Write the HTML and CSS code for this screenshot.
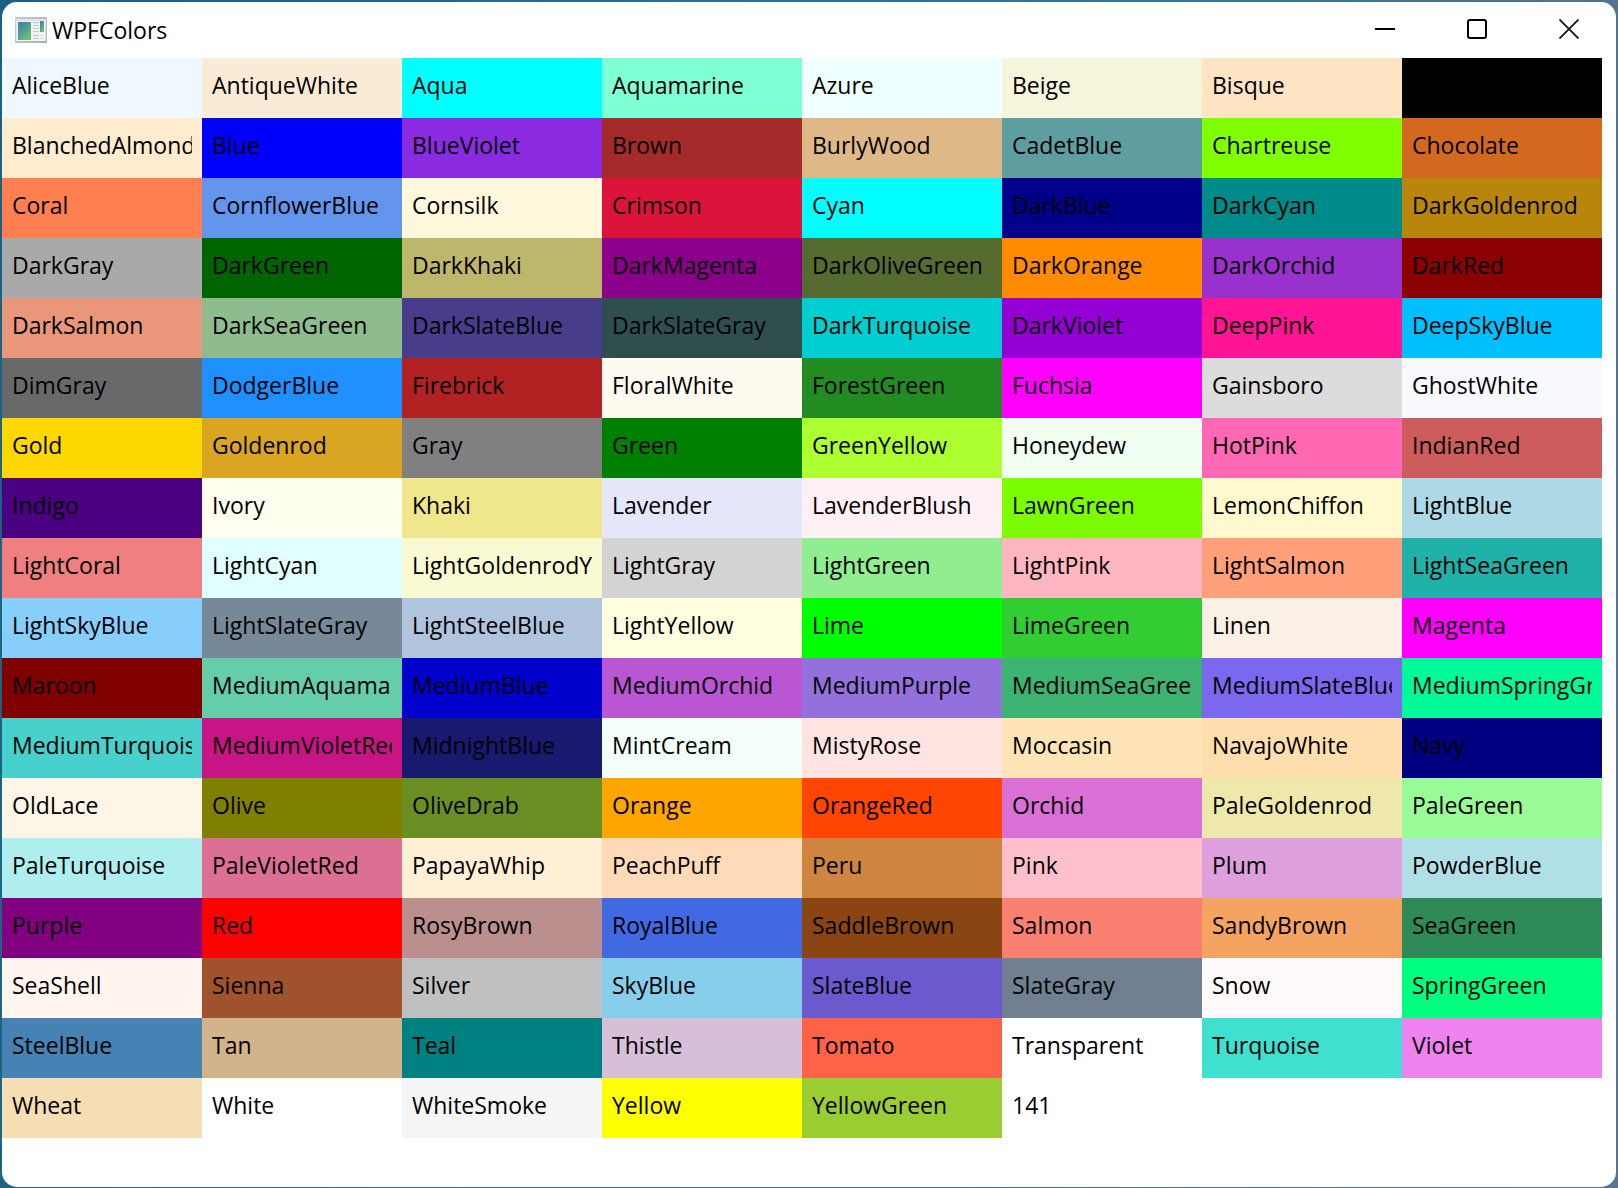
FILE: index.html
```html
<!DOCTYPE html>
<html lang="en">
<head>
<meta charset="utf-8">
<title>WPFColors</title>
<link rel="stylesheet" href="styles.css">
</head>
<body>
<div class="window">
<header class="titlebar">
<svg class="app-icon" width="32" height="26" viewBox="0 0 32 26" aria-hidden="true">
<defs><linearGradient id="pane" x1="0" y1="0" x2="0.6" y2="1"><stop offset="0" stop-color="#3f7fa6"/><stop offset="0.5" stop-color="#4c9a90"/><stop offset="1" stop-color="#6fbf73"/></linearGradient>
<linearGradient id="frame" x1="0" y1="0" x2="1" y2="1"><stop offset="0" stop-color="#d3d7dc"/><stop offset="1" stop-color="#a9adb3"/></linearGradient></defs>
<rect width="32" height="26" fill="url(#frame)"/>
<rect x="1" y="2" width="30" height="22" fill="#dfe2e6"/>
<path d="M1 1h30" stroke="#b4bac2"/>
<rect x="2" y="4" width="15" height="20" fill="#f4f5f5"/>
<rect x="3" y="5" width="13" height="18" fill="url(#pane)"/>
<rect x="17" y="4" width="13" height="20" fill="#f1f2f3"/>
<path d="M18 5.500h6M18 8.500h6M18 11.500h6M18 14.500h6M18 18.500h6M18 21.500h6" stroke="#c3c7cb"/>
<rect x="25" y="4" width="4" height="11" fill="url(#pane)"/>
<path d="M25 18.500h4M25 21.500h4" stroke="#dadcdf"/>
</svg>
<h1 class="title">WPFColors</h1>
<div class="controls">
<button class="control" type="button" aria-label="Minimize"><svg width="20" height="20" viewBox="0 0 20 20"><path d="M0 10h20" stroke="#000" stroke-width="2"/></svg></button>
<button class="control" type="button" aria-label="Maximize"><svg width="20" height="20" viewBox="0 0 20 20"><rect x="1" y="1" width="18" height="18" rx="2" fill="none" stroke="#000" stroke-width="2"/></svg></button>
<button class="control" type="button" aria-label="Close"><svg width="20" height="20" viewBox="0 0 20 20"><path d="M.5.5l19 19M19.500.5l-19 19" stroke="#111" stroke-width="1.700"/></svg></button>
</div>
</header>
<ul class="palette">
<li class="swatch" style="background:AliceBlue"><span>AliceBlue</span></li>
<li class="swatch" style="background:AntiqueWhite"><span>AntiqueWhite</span></li>
<li class="swatch" style="background:Aqua"><span>Aqua</span></li>
<li class="swatch" style="background:Aquamarine"><span>Aquamarine</span></li>
<li class="swatch" style="background:Azure"><span>Azure</span></li>
<li class="swatch" style="background:Beige"><span>Beige</span></li>
<li class="swatch" style="background:Bisque"><span>Bisque</span></li>
<li class="swatch" style="background:Black"><span>Black</span></li>
<li class="swatch" style="background:BlanchedAlmond"><span>BlanchedAlmond</span></li>
<li class="swatch" style="background:Blue"><span>Blue</span></li>
<li class="swatch" style="background:BlueViolet"><span>BlueViolet</span></li>
<li class="swatch" style="background:Brown"><span>Brown</span></li>
<li class="swatch" style="background:BurlyWood"><span>BurlyWood</span></li>
<li class="swatch" style="background:CadetBlue"><span>CadetBlue</span></li>
<li class="swatch" style="background:Chartreuse"><span>Chartreuse</span></li>
<li class="swatch" style="background:Chocolate"><span>Chocolate</span></li>
<li class="swatch" style="background:Coral"><span>Coral</span></li>
<li class="swatch" style="background:CornflowerBlue"><span>CornflowerBlue</span></li>
<li class="swatch" style="background:Cornsilk"><span>Cornsilk</span></li>
<li class="swatch" style="background:Crimson"><span>Crimson</span></li>
<li class="swatch" style="background:Cyan"><span>Cyan</span></li>
<li class="swatch" style="background:DarkBlue"><span>DarkBlue</span></li>
<li class="swatch" style="background:DarkCyan"><span>DarkCyan</span></li>
<li class="swatch" style="background:DarkGoldenrod"><span>DarkGoldenrod</span></li>
<li class="swatch" style="background:DarkGray"><span>DarkGray</span></li>
<li class="swatch" style="background:DarkGreen"><span>DarkGreen</span></li>
<li class="swatch" style="background:DarkKhaki"><span>DarkKhaki</span></li>
<li class="swatch" style="background:DarkMagenta"><span>DarkMagenta</span></li>
<li class="swatch" style="background:DarkOliveGreen"><span>DarkOliveGreen</span></li>
<li class="swatch" style="background:DarkOrange"><span>DarkOrange</span></li>
<li class="swatch" style="background:DarkOrchid"><span>DarkOrchid</span></li>
<li class="swatch" style="background:DarkRed"><span>DarkRed</span></li>
<li class="swatch" style="background:DarkSalmon"><span>DarkSalmon</span></li>
<li class="swatch" style="background:DarkSeaGreen"><span>DarkSeaGreen</span></li>
<li class="swatch" style="background:DarkSlateBlue"><span>DarkSlateBlue</span></li>
<li class="swatch" style="background:DarkSlateGray"><span>DarkSlateGray</span></li>
<li class="swatch" style="background:DarkTurquoise"><span>DarkTurquoise</span></li>
<li class="swatch" style="background:DarkViolet"><span>DarkViolet</span></li>
<li class="swatch" style="background:DeepPink"><span>DeepPink</span></li>
<li class="swatch" style="background:DeepSkyBlue"><span>DeepSkyBlue</span></li>
<li class="swatch" style="background:DimGray"><span>DimGray</span></li>
<li class="swatch" style="background:DodgerBlue"><span>DodgerBlue</span></li>
<li class="swatch" style="background:Firebrick"><span>Firebrick</span></li>
<li class="swatch" style="background:FloralWhite"><span>FloralWhite</span></li>
<li class="swatch" style="background:ForestGreen"><span>ForestGreen</span></li>
<li class="swatch" style="background:Fuchsia"><span>Fuchsia</span></li>
<li class="swatch" style="background:Gainsboro"><span>Gainsboro</span></li>
<li class="swatch" style="background:GhostWhite"><span>GhostWhite</span></li>
<li class="swatch" style="background:Gold"><span>Gold</span></li>
<li class="swatch" style="background:Goldenrod"><span>Goldenrod</span></li>
<li class="swatch" style="background:Gray"><span>Gray</span></li>
<li class="swatch" style="background:Green"><span>Green</span></li>
<li class="swatch" style="background:GreenYellow"><span>GreenYellow</span></li>
<li class="swatch" style="background:Honeydew"><span>Honeydew</span></li>
<li class="swatch" style="background:HotPink"><span>HotPink</span></li>
<li class="swatch" style="background:IndianRed"><span>IndianRed</span></li>
<li class="swatch" style="background:Indigo"><span>Indigo</span></li>
<li class="swatch" style="background:Ivory"><span>Ivory</span></li>
<li class="swatch" style="background:Khaki"><span>Khaki</span></li>
<li class="swatch" style="background:Lavender"><span>Lavender</span></li>
<li class="swatch" style="background:LavenderBlush"><span>LavenderBlush</span></li>
<li class="swatch" style="background:LawnGreen"><span>LawnGreen</span></li>
<li class="swatch" style="background:LemonChiffon"><span>LemonChiffon</span></li>
<li class="swatch" style="background:LightBlue"><span>LightBlue</span></li>
<li class="swatch" style="background:LightCoral"><span>LightCoral</span></li>
<li class="swatch" style="background:LightCyan"><span>LightCyan</span></li>
<li class="swatch" style="background:LightGoldenrodYellow"><span>LightGoldenrodYellow</span></li>
<li class="swatch" style="background:LightGray"><span>LightGray</span></li>
<li class="swatch" style="background:LightGreen"><span>LightGreen</span></li>
<li class="swatch" style="background:LightPink"><span>LightPink</span></li>
<li class="swatch" style="background:LightSalmon"><span>LightSalmon</span></li>
<li class="swatch" style="background:LightSeaGreen"><span>LightSeaGreen</span></li>
<li class="swatch" style="background:LightSkyBlue"><span>LightSkyBlue</span></li>
<li class="swatch" style="background:LightSlateGray"><span>LightSlateGray</span></li>
<li class="swatch" style="background:LightSteelBlue"><span>LightSteelBlue</span></li>
<li class="swatch" style="background:LightYellow"><span>LightYellow</span></li>
<li class="swatch" style="background:Lime"><span>Lime</span></li>
<li class="swatch" style="background:LimeGreen"><span>LimeGreen</span></li>
<li class="swatch" style="background:Linen"><span>Linen</span></li>
<li class="swatch" style="background:Magenta"><span>Magenta</span></li>
<li class="swatch" style="background:Maroon"><span>Maroon</span></li>
<li class="swatch" style="background:MediumAquamarine"><span>MediumAquamarine</span></li>
<li class="swatch" style="background:MediumBlue"><span>MediumBlue</span></li>
<li class="swatch" style="background:MediumOrchid"><span>MediumOrchid</span></li>
<li class="swatch" style="background:MediumPurple"><span>MediumPurple</span></li>
<li class="swatch" style="background:MediumSeaGreen"><span>MediumSeaGreen</span></li>
<li class="swatch" style="background:MediumSlateBlue"><span>MediumSlateBlue</span></li>
<li class="swatch" style="background:MediumSpringGreen"><span>MediumSpringGreen</span></li>
<li class="swatch" style="background:MediumTurquoise"><span>MediumTurquoise</span></li>
<li class="swatch" style="background:MediumVioletRed"><span>MediumVioletRed</span></li>
<li class="swatch" style="background:MidnightBlue"><span>MidnightBlue</span></li>
<li class="swatch" style="background:MintCream"><span>MintCream</span></li>
<li class="swatch" style="background:MistyRose"><span>MistyRose</span></li>
<li class="swatch" style="background:Moccasin"><span>Moccasin</span></li>
<li class="swatch" style="background:NavajoWhite"><span>NavajoWhite</span></li>
<li class="swatch" style="background:Navy"><span>Navy</span></li>
<li class="swatch" style="background:OldLace"><span>OldLace</span></li>
<li class="swatch" style="background:Olive"><span>Olive</span></li>
<li class="swatch" style="background:OliveDrab"><span>OliveDrab</span></li>
<li class="swatch" style="background:Orange"><span>Orange</span></li>
<li class="swatch" style="background:OrangeRed"><span>OrangeRed</span></li>
<li class="swatch" style="background:Orchid"><span>Orchid</span></li>
<li class="swatch" style="background:PaleGoldenrod"><span>PaleGoldenrod</span></li>
<li class="swatch" style="background:PaleGreen"><span>PaleGreen</span></li>
<li class="swatch" style="background:PaleTurquoise"><span>PaleTurquoise</span></li>
<li class="swatch" style="background:PaleVioletRed"><span>PaleVioletRed</span></li>
<li class="swatch" style="background:PapayaWhip"><span>PapayaWhip</span></li>
<li class="swatch" style="background:PeachPuff"><span>PeachPuff</span></li>
<li class="swatch" style="background:Peru"><span>Peru</span></li>
<li class="swatch" style="background:Pink"><span>Pink</span></li>
<li class="swatch" style="background:Plum"><span>Plum</span></li>
<li class="swatch" style="background:PowderBlue"><span>PowderBlue</span></li>
<li class="swatch" style="background:Purple"><span>Purple</span></li>
<li class="swatch" style="background:Red"><span>Red</span></li>
<li class="swatch" style="background:RosyBrown"><span>RosyBrown</span></li>
<li class="swatch" style="background:RoyalBlue"><span>RoyalBlue</span></li>
<li class="swatch" style="background:SaddleBrown"><span>SaddleBrown</span></li>
<li class="swatch" style="background:Salmon"><span>Salmon</span></li>
<li class="swatch" style="background:SandyBrown"><span>SandyBrown</span></li>
<li class="swatch" style="background:SeaGreen"><span>SeaGreen</span></li>
<li class="swatch" style="background:SeaShell"><span>SeaShell</span></li>
<li class="swatch" style="background:Sienna"><span>Sienna</span></li>
<li class="swatch" style="background:Silver"><span>Silver</span></li>
<li class="swatch" style="background:SkyBlue"><span>SkyBlue</span></li>
<li class="swatch" style="background:SlateBlue"><span>SlateBlue</span></li>
<li class="swatch" style="background:SlateGray"><span>SlateGray</span></li>
<li class="swatch" style="background:Snow"><span>Snow</span></li>
<li class="swatch" style="background:SpringGreen"><span>SpringGreen</span></li>
<li class="swatch" style="background:SteelBlue"><span>SteelBlue</span></li>
<li class="swatch" style="background:Tan"><span>Tan</span></li>
<li class="swatch" style="background:Teal"><span>Teal</span></li>
<li class="swatch" style="background:Thistle"><span>Thistle</span></li>
<li class="swatch" style="background:Tomato"><span>Tomato</span></li>
<li class="swatch" style="background:Transparent"><span>Transparent</span></li>
<li class="swatch" style="background:Turquoise"><span>Turquoise</span></li>
<li class="swatch" style="background:Violet"><span>Violet</span></li>
<li class="swatch" style="background:Wheat"><span>Wheat</span></li>
<li class="swatch" style="background:White"><span>White</span></li>
<li class="swatch" style="background:WhiteSmoke"><span>WhiteSmoke</span></li>
<li class="swatch" style="background:Yellow"><span>Yellow</span></li>
<li class="swatch" style="background:YellowGreen"><span>YellowGreen</span></li>
<li class="swatch"><span>141</span></li>
</ul>
</div>
</body>
</html>
```
FILE: styles.css
```css
* {
  box-sizing: border-box;
}

body {
  display: flex;
  min-height: 100vh;
  margin: 0;
  padding: 2px 2px 1px;
  background: linear-gradient(100deg, #1a6080, #2c7593 50%, #5b7390);
  color: #000;
  font: 23px/32px "Segoe UI", "Open Sans", sans-serif;
}

.window {
  flex: 1;
  min-width: 0;
  background: #fff;
  border-radius: 15px;
}

.titlebar {
  display: flex;
  align-items: center;
  height: 56px;
  padding-left: 13px;
}

.app-icon {
  flex: none;
}

.title {
  margin: 0 auto 0 5px;
  font-size: 23px;
  font-weight: 400;
}

.controls {
  display: flex;
  align-self: stretch;
  padding-right: 1px;
}

.control {
  display: grid;
  place-items: center;
  width: 92px;
  padding: 0 0 2px;
  border: 0;
  background: none;
}

.palette {
  display: flex;
  flex-wrap: wrap;
  margin: 0;
  padding: 0;
  list-style: none;
}

.swatch {
  width: 200px;
  height: 60px;
  padding: 11px 10px;
}

.swatch span {
  display: block;
  overflow: hidden;
  white-space: nowrap;
}
```
